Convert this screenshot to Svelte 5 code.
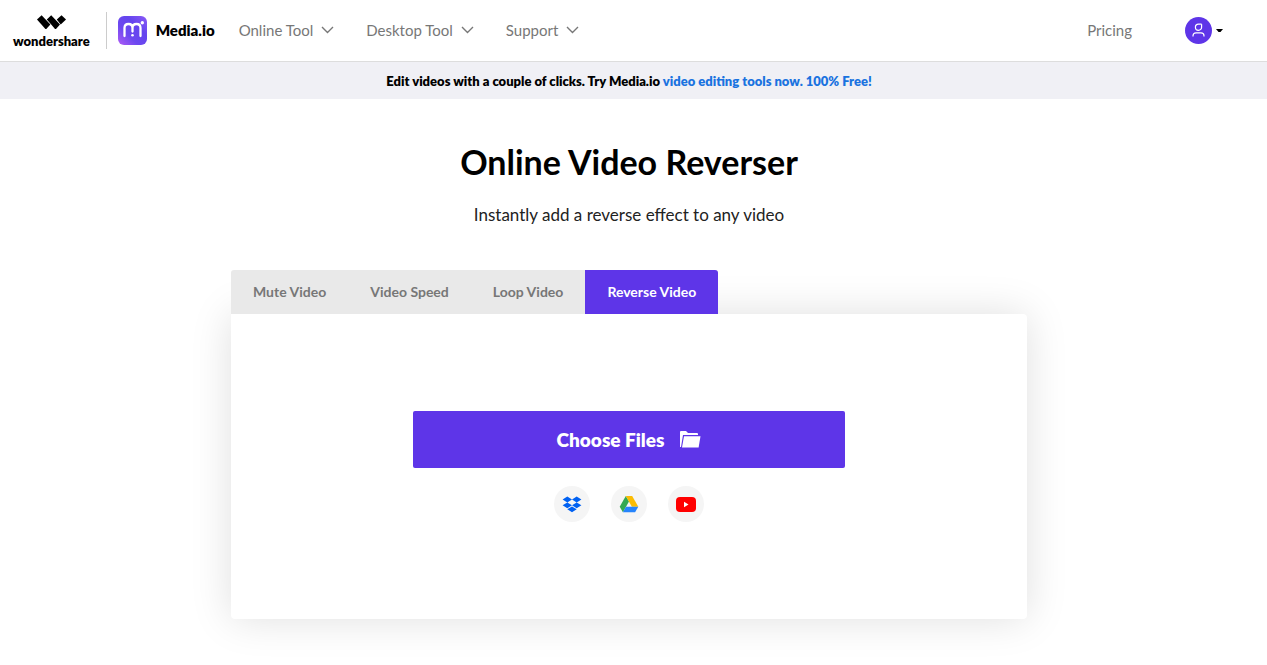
<script>
  const menus = ['Online Tool', 'Desktop Tool', 'Support'];
  const tabs = ['Mute Video', 'Video Speed', 'Loop Video', 'Reverse Video'];
  let active = $state('Reverse Video');
</script>

<header>
  <a class="brand" href="#wondershare">
    <svg width="29" height="15" viewBox="0 0 29 15" aria-hidden="true">
      <path d="M0 4.600 4.600 0.200 13.400 9.400 9.300 14 8.400 14Z" />
      <path d="M9.800 4.400 14.200 0.200 23 9.400 19 14 18 14 14 9.200Z" />
      <path d="M19.800 4.600 24.500 0.200 29 4.600 23.700 9.600Z" />
    </svg>
    <span>wondershare</span>
  </a>
  <a class="product" href="#media">
    <svg width="29" height="29" viewBox="0 0 29 29" aria-hidden="true">
      <defs>
        <linearGradient id="tile" x1="0" y1="1" x2="1" y2="0">
          <stop offset="0" stop-color="#b05cf5" />
          <stop offset=".35" stop-color="#6d48f0" />
          <stop offset=".65" stop-color="#6445ee" />
          <stop offset="1" stop-color="#8c5af6" />
        </linearGradient>
      </defs>
      <rect width="29" height="29" rx="6" fill="url(#tile)" />
      <path d="M6.500 20V12Q6.500 8 10.500 8T14.500 12V15.500M14.500 12Q14.500 8 18.500 8T22.500 12V20" fill="none" stroke="#fff" stroke-width="2.300" stroke-linecap="round" />
      <circle cx="14.500" cy="19.300" r="1.300" fill="#fff" />
      <circle cx="24.300" cy="6.700" r="1.700" fill="#fff" />
    </svg>
    <span>Media.io</span>
  </a>
  <nav>
    {#each menus as menu}
      <button>
        {menu}
        <svg width="13" height="8" viewBox="0 0 13 8" aria-hidden="true">
          <path d="M1 1 6.500 6.500 12 1" fill="none" stroke="#777" stroke-width="1.400" />
        </svg>
      </button>
    {/each}
  </nav>
  <a class="pricing" href="#pricing">Pricing</a>
  <button class="account" aria-label="Account">
    <svg width="38" height="27" viewBox="0 0 38 27" aria-hidden="true">
      <circle cx="13.500" cy="13.500" r="13.500" fill="#5e35e8" />
      <g fill="none" stroke="#fff" stroke-width="1.200">
        <path d="M16.600 7.300V10.200A3.100 3.100 0 1 1 13.500 7.100H16.600" />
        <path d="M8 19.500V18.800Q8 15.800 11 15.800H16Q19 15.800 19 18.800V19.500" />
      </g>
      <path d="M31 12h7l-2.500 3h-2z" fill="#000" />
    </svg>
  </button>
</header>

<p class="notice">
  Edit videos with a couple of clicks. Try Media.io <a href="#tools">video editing tools now. 100% Free!</a>
</p>

<main>
  <h1>Online Video Reverser</h1>
  <p class="lead">Instantly add a reverse effect to any video</p>
  <section>
    <div class="tabs" role="tablist">
      {#each tabs as tab}
        <button role="tab" aria-selected={active === tab} class:active={active === tab} onclick={() => (active = tab)}>{tab}</button>
      {/each}
    </div>
    <div class="panel">
      <button class="choose">
        Choose Files
        <svg width="21" height="17" viewBox="0 0 21 17" aria-hidden="true">
          <path d="M0 16V1Q0 0 1 0H6L8 2H17Q18 2 18 3V4H3L1 16Z" fill="#fff" />
          <path d="M4 5.200H20.500L18.600 16.500H2Z" fill="#fff" />
        </svg>
      </button>
      <div class="sources">
        <button aria-label="Dropbox">
          <svg width="20" height="18" viewBox="0 0 20 18" aria-hidden="true">
            <path d="M5.300 1.500 10 4.400 5.300 7.400 0.600 4.400ZM14.700 1.500 19.400 4.400 14.700 7.400 10 4.400ZM5.300 7.400 10 10.300 5.300 13.300 0.600 10.300ZM14.700 7.400 19.400 10.300 14.700 13.300 10 10.300ZM10 11.400 14.700 14.300 10 17.300 5.300 14.300Z" fill="#0061f2" />
          </svg>
        </button>
        <button aria-label="Google Drive">
          <svg width="20" height="18" viewBox="0 0 20 18" aria-hidden="true">
            <path d="M6.800 1 10 6.500 3.900 17.200 0.700 11.700Z" fill="#34a853" />
            <path d="M6.800 1H13.200L19.300 11.700H12.900Z" fill="#fbbc04" />
            <path d="M7 11.700H19.300L16.100 17.200H3.900Z" fill="#2684fc" />
          </svg>
        </button>
        <button aria-label="YouTube">
          <svg width="20" height="15" viewBox="0 0 20 15" aria-hidden="true">
            <rect width="20" height="15" rx="4" fill="#f00" />
            <path d="M8 4.800 12.500 7.500 8 10.200Z" fill="#fff" />
          </svg>
        </button>
      </div>
    </div>
  </section>
</main>

<style>
  :global(body) { margin: 0; background: #fff; font-family: Lato, sans-serif; color: #000; }
  button { border: 0; padding: 0; background: none; font: inherit; color: inherit; cursor: pointer; }
  a { color: inherit; text-decoration: none; }
  svg { display: block; flex: none; }

  header { display: flex; align-items: center; height: 60px; padding: 0 44px 1px 13px; border-bottom: 1px solid #ddd; }
  .brand { display: flex; flex-direction: column; align-items: center; gap: 3px; padding-top: 3px; padding-right: 16px; border-right: 1px solid #ccc; font-size: 13px; line-height: 16px; font-weight: 800; }
  .product { display: flex; align-items: center; gap: 9px; margin-left: 11px; font-size: 15px; line-height: 24px; font-weight: 800; }
  nav { display: flex; gap: 32px; margin-left: 24px; }
  nav button { display: flex; align-items: center; gap: 8px; }
  nav button, .pricing { font-size: 15px; line-height: 24px; color: #777; }
  .pricing { margin-left: auto; }
  .account { margin-left: 53px; }

  .notice { margin: 0; padding: 9px 9px 7px 0; background: #f0f0f5; text-align: center; font-size: 13px; line-height: 21px; font-weight: 800; }
  .notice a { color: #1a73e0; }

  main { padding: 37px 9px 46px 0; }
  h1 { margin: 0; text-align: center; font-size: 34px; line-height: 52px; font-weight: 700; }
  .lead { margin: 15px 0 0; text-align: center; font-size: 17px; line-height: 24px; color: #222; }
  section { max-width: 796px; margin: 43px auto 0; }
  .tabs { position: relative; z-index: 1; display: flex; width: fit-content; border-radius: 3px 3px 0 0; overflow: hidden; background: #e9e9e9; }
  .tabs button { padding: 0 22px; font-size: 14px; line-height: 44px; font-weight: 700; color: #777; }
  .tabs button.active { background: #5e35e8; color: #fff; }
  .panel { display: flex; flex-direction: column; align-items: center; gap: 18px; padding: 97px 20px; border-radius: 0 4px 4px 4px; background: #fff; box-shadow: 0 0 42px rgb(0 0 0 / 13%); }
  .choose { display: flex; align-items: center; justify-content: center; gap: 16px; width: 100%; max-width: 432px; border-radius: 2px; background: #5e35e8; color: #fff; font-size: 19px; line-height: 57px; font-weight: 800; }
  .sources { display: flex; gap: 21px; }
  .sources button { display: grid; place-items: center; width: 36px; height: 36px; border-radius: 50%; background: #f5f5f5; }
</style>
